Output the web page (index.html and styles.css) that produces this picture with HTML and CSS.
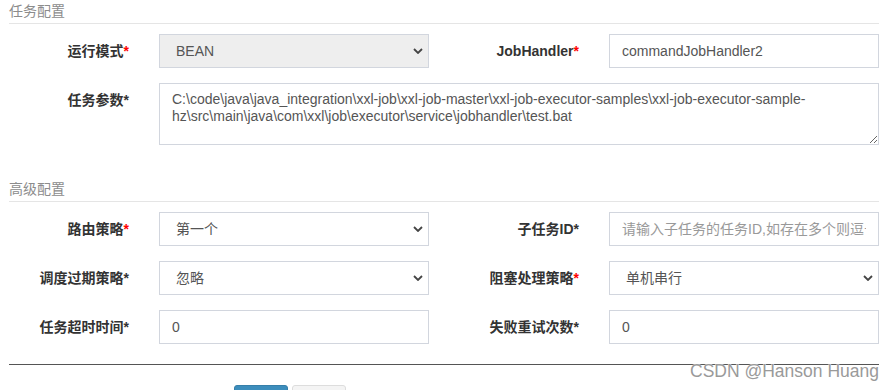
FILE: index.html
```html
<!DOCTYPE html>
<html lang="zh-CN">
<head>
  <meta charset="UTF-8">
  <meta name="viewport" content="width=device-width, initial-scale=1.0">
  <title>任务配置</title>
  <link rel="stylesheet" href="styles.css">
</head>
<body>
  <form class="page">

    <h4 class="sub-title">任务配置</h4>
    <div class="form-grid">
      <label class="form-label">运行模式<span class="req">*</span></label>
      <div class="select-wrap">
        <select class="form-control" disabled>
          <option>BEAN</option>
        </select>
        <svg class="chevron" width="10" height="6" viewBox="0 0 10 6"><path d="M1 1l4 4 4-4" fill="none" stroke="#444" stroke-width="1.8"/></svg>
      </div>
      <label class="form-label">JobHandler<span class="req">*</span></label>
      <input class="form-control" type="text" value="commandJobHandler2">

      <label class="form-label">任务参数*</label>
      <textarea class="form-control params">C:\code\java\java_integration\xxl-job\xxl-job-master\xxl-job-executor-samples\xxl-job-executor-sample-hz\src\main\java\com\xxl\job\executor\service\jobhandler\test.bat</textarea>
    </div>

    <h4 class="sub-title second">高级配置</h4>
    <div class="form-grid">
      <label class="form-label">路由策略<span class="req">*</span></label>
      <div class="select-wrap">
        <select class="form-control">
          <option>第一个</option>
        </select>
        <svg class="chevron" width="10" height="6" viewBox="0 0 10 6"><path d="M1 1l4 4 4-4" fill="none" stroke="#444" stroke-width="1.8"/></svg>
      </div>
      <label class="form-label">子任务ID*</label>
      <input class="form-control" type="text" placeholder="请输入子任务的任务ID,如存在多个则逗号分隔">

      <label class="form-label">调度过期策略*</label>
      <div class="select-wrap">
        <select class="form-control">
          <option>忽略</option>
        </select>
        <svg class="chevron" width="10" height="6" viewBox="0 0 10 6"><path d="M1 1l4 4 4-4" fill="none" stroke="#444" stroke-width="1.8"/></svg>
      </div>
      <label class="form-label">阻塞处理策略<span class="req">*</span></label>
      <div class="select-wrap">
        <select class="form-control">
          <option>单机串行</option>
        </select>
        <svg class="chevron" width="10" height="6" viewBox="0 0 10 6"><path d="M1 1l4 4 4-4" fill="none" stroke="#444" stroke-width="1.8"/></svg>
      </div>

      <label class="form-label">任务超时时间*</label>
      <input class="form-control" type="text" value="0">
      <label class="form-label">失败重试次数*</label>
      <input class="form-control" type="text" value="0">
    </div>

    <hr class="divider">

    <div class="actions">
      <button type="button" class="btn btn-primary" aria-label="保存"></button>
      <button type="button" class="btn btn-default" aria-label="取消"></button>
    </div>
  </form>

  <div class="watermark">CSDN @Hanson Huang</div>
</body>
</html>
```

FILE: styles.css
```css
html, body {
  margin: 0;
  padding: 0;
  height: 390px;
  overflow: hidden;
  background: #fff;
  font-family: "Liberation Sans", "Noto Sans CJK SC", sans-serif;
  font-size: 14px;
  color: #333;
}

.page {
  width: 870px;
  margin: 0 0 0 9px;
}

.sub-title {
  margin: 0 0 10px;
  padding: 1px 0 2px;
  font-size: 14px;
  line-height: 20px;
  font-weight: normal;
  color: #8c8c8c;
  border-bottom: 1px solid #e5e5e5;
}

.sub-title.second {
  margin-top: 33px;
}

.form-grid {
  display: grid;
  grid-template-columns: 150px 270px 180px 270px;
  row-gap: 15px;
}

.form-label {
  padding-right: 30px;
  text-align: right;
  font-weight: bold;
  line-height: 34px;
  white-space: nowrap;
}

.req {
  color: #f00;
}

.form-control {
  box-sizing: border-box;
  width: 100%;
  height: 34px;
  margin: 0;
  padding: 6px 12px;
  border: 1px solid #d2d6de;
  border-radius: 0;
  background: #fff;
  font-family: inherit;
  font-size: 14px;
  color: #555;
  outline: none;
}

.form-control::placeholder {
  color: #999;
}

select.form-control {
  appearance: none;
  -webkit-appearance: none;
  padding-left: 16px;
}

select.form-control:disabled {
  background: #eee;
  opacity: 1;
  color: #555;
}

.select-wrap {
  position: relative;
}

.chevron {
  position: absolute;
  right: 6px;
  top: 14px;
  pointer-events: none;
}

.params {
  grid-column: 2 / -1;
  height: 62px;
  line-height: 17px;
  padding-top: 7px;
  resize: vertical;
}

.divider {
  margin: 20px 0 0;
  border: 0;
  border-top: 1px solid #555;
  height: 0;
}

.actions {
  display: flex;
  gap: 4px;
  padding: 20px 0 0 225px;
}

.btn {
  width: 54px;
  height: 34px;
  border-radius: 3px;
  font-family: inherit;
  font-size: 14px;
}

.btn-primary {
  background: #3c8dbc;
  border: 1px solid #367fa9;
  color: #fff;
}

.btn-default {
  background: #f4f4f4;
  border: 1px solid #ddd;
  color: #444;
}

.watermark {
  position: absolute;
  left: 690px;
  top: 361px;
  font-size: 17.5px;
  line-height: 20px;
  color: #9a9a9a;
  text-shadow: 0 0 1px #fff, 0 0 1px #fff;
}
```
